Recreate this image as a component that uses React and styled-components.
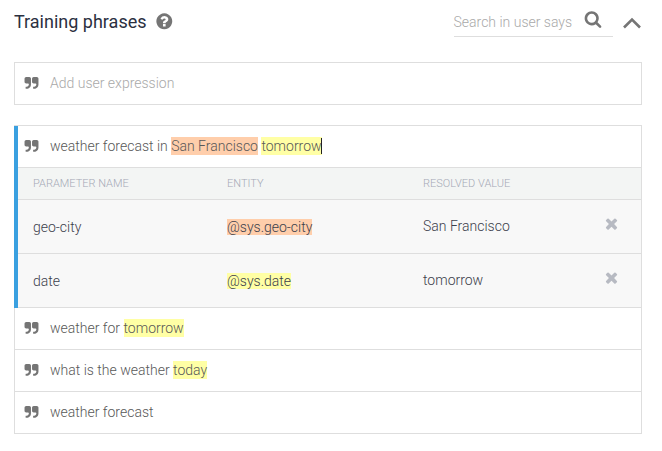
import React from "react";
import styled, { createGlobalStyle } from "styled-components";

const GlobalStyle = createGlobalStyle`
  body { margin: 0; background: #fff; }
  * { box-sizing: border-box; }
`;

const PATHS = {
  help: "M1024 1376v-192q0-14-9-23t-23-9h-192q-14 0-23 9t-9 23v192q0 14 9 23t23 9h192q14 0 23-9t9-23zm256-672q0-88-55.5-163t-138.5-116-170-41q-243 0-371 213-15 24 8 42l132 100q7 6 19 6 16 0 25-12 53-68 86-92 34-24 86-24 48 0 85.5 26t37.5 59q0 38-20 61t-68 45q-63 28-115.5 86.5t-52.5 125.5v36q0 14 9 23t23 9h192q14 0 23-9t9-23q0-19 21.5-49.5t54.5-49.5q32-18 49-28.5t46-35 44.5-48 28-60.5 12.5-81zm384 192q0 209-103 385.5t-279.5 279.5-385.5 103-385.5-103-279.5-279.5-103-385.5 103-385.5 279.5-279.5 385.5-103 385.5 103 279.5 279.5 103 385.5z",
  quote: "M832 320v704q0 104-40.5 198.5t-109.5 163.5-163.5 109.5-198.5 40.5h-64q-26 0-45-19t-19-45v-128q0-26 19-45t45-19h64q106 0 181-75t75-181v-32q0-40-28-68t-68-28h-224q-80 0-136-56t-56-136v-384q0-80 56-136t136-56h384q80 0 136 56t56 136zm896 0v704q0 104-40.5 198.5t-109.5 163.5-163.5 109.5-198.5 40.5h-64q-26 0-45-19t-19-45v-128q0-26 19-45t45-19h64q106 0 181-75t75-181v-32q0-40-28-68t-68-28h-224q-80 0-136-56t-56-136v-384q0-80 56-136t136-56h384q80 0 136 56t56 136z",
  times: "M1490 1322q0 40-28 68l-136 136q-28 28-68 28t-68-28l-294-294-294 294q-28 28-68 28t-68-28l-136-136q-28-28-28-68t28-68l294-294-294-294q-28-28-28-68t28-68l136-136q28-28 68-28t68 28l294 294 294-294q28-28 68-28t68 28l136 136q28 28 28 68t-28 68l-294 294 294 294q28 28 28 68z",
  search: "M1216 832q0-185-131.5-316.5t-316.5-131.5-316.5 131.5-131.5 316.5 131.5 316.5 316.5 131.5 316.5-131.5 131.5-316.5zm512 832q0 52-38 90t-90 38q-54 0-90-38l-343-342q-179 124-399 124-143 0-273.5-55.5t-225-150-150-225-55.5-273.5 55.5-273.5 150-225 225-150 273.5-55.5 273.5 55.5 225 150 150 225 55.5 273.5q0 220-124 399l343 343q37 37 37 90z",
};

const Svg = styled.svg`
  display: block;
  flex: none;
  width: ${(p) => p.$size}px;
  height: ${(p) => p.$size}px;
  fill: ${(p) => p.$color || "#757575"};
`;

const Icon = ({ name, size, color }) => (
  <Svg viewBox="0 0 1792 1792" $size={size} $color={color} aria-hidden="true">
    <path d={PATHS[name]} />
  </Svg>
);

const Page = styled.main`
  width: 662px;
  height: 451px;
  padding: 0 20px 0 14px;
  overflow: hidden;
  font-family: Roboto, sans-serif;
  font-size: 14px;
  font-weight: 300;
  color: #4b4b4b;
`;

const Header = styled.header`
  display: flex;
  height: 62px;
`;

const Title = styled.h1`
  margin: 0;
  padding-top: 9px;
  width: 141px;
  font-size: 18px;
  line-height: 26px;
  font-weight: 400;
  color: #2b303f;
`;

const HelpButton = styled.span`
  padding-top: 12px;
`;

const Search = styled.div`
  display: flex;
  justify-content: space-between;
  width: 159.5px;
  height: 37px;
  margin-left: auto;
  padding: 10px 11.5px 0 0;
  border-bottom: 1px solid #dedede;
  color: #a9a9a9;
  line-height: 24px;
`;

const Chevron = styled.svg`
  display: block;
  width: 18px;
  height: 12px;
  margin: 17px 1px 0 10px;
  fill: none;
  stroke: #757575;
  stroke-width: 2.6;
`;

const PhraseRow = styled.div`
  display: flex;
  align-items: center;
  height: 42px;
  padding-left: 9px;
  border-bottom: 1px solid #dedede;
  background: #fff;
  color: ${(p) => (p.$placeholder ? "#a9a9a9" : "#585858")};
`;

const Phrase = styled.span`
  margin: 0 0 2px 11px;
  line-height: 18px;
  white-space: pre;
`;

const Box = styled.section`
  border: 1px solid #dedede;
  border-bottom: 0;
  margin-bottom: 20px;
`;

const List = styled.section`
  border-right: 1px solid #dedede;
`;

const Expanded = styled.div`
  border-top: 1px solid #dedede;
  border-left: 4px solid #3aa0e0;
  border-image: linear-gradient(#3aa0e0, #3aa0e0) 0 0 0 4;
  background: linear-gradient(#dedede, #dedede) top / 100% 1px no-repeat border-box;

  & > ${PhraseRow} { padding-left: 6px; }
`;

const Collapsed = styled.div`
  border-left: 1px solid #dedede;
`;

const Mark = styled.mark`
  display: inline-block;
  height: ${(p) => (p.$compact ? 16 : 18)}px;
  line-height: ${(p) => (p.$compact ? 16 : 18)}px;
  color: inherit;
  background: ${(p) => (p.$tone === "city" ? "#ffceab" : "#ffffa5")};
`;

const Caret = styled.span`
  display: inline-block;
  width: 1px;
  height: 16px;
  margin-left: -1px;
  vertical-align: -3px;
  background: #222;
`;

const Grid = styled.div`
  display: grid;
  grid-template-columns: 194px 196px 180px 1fr;
  padding-left: 15px;
  border-bottom: 1px solid #dedede;
`;

const GridHead = styled(Grid)`
  height: 32px;
  line-height: 31px;
  font-size: 11px;
  color: #a5a9b6;
  background: #f3f5f4;
`;

const GridRow = styled(Grid)`
  height: 54px;
  color: #3c404c;
  background: #f8f8f8;
  line-height: 18px;
`;

const Cell = styled.span`
  padding-top: ${(p) => (p.$raised ? 17 : 18)}px;
`;

const Remove = styled.span`
  padding-top: 15px;
`;

const Line = ({ children, placeholder }) => (
  <PhraseRow $placeholder={placeholder}>
    <Icon name="quote" size={15} />
    <Phrase>{children}</Phrase>
  </PhraseRow>
);

const params = [
  { name: "geo-city", entity: "@sys.geo-city", value: "San Francisco", tone: "city" },
  { name: "date", entity: "@sys.date", value: "tomorrow", tone: "date" },
];

export default function App() {
  return (
    <Page>
      <GlobalStyle />
      <Header>
        <Title>Training phrases</Title>
        <HelpButton><Icon name="help" size={18.6} /></HelpButton>
        <Search>
          <span>Search in user says</span>
          <Icon name="search" size={18} />
        </Search>
        <Chevron viewBox="0 0 18 12"><path d="M1 10.5 9 2.5 17 10.5" /></Chevron>
      </Header>
      <Box>
        <Line placeholder>Add user expression</Line>
      </Box>
      <List>
        <Expanded>
          <Line>
            weather forecast in <Mark $tone="city">San Francisco</Mark> <Mark>tomorrow</Mark><Caret />
          </Line>
          <GridHead>
            <span>PARAMETER NAME</span>
            <span>ENTITY</span>
            <span>RESOLVED VALUE</span>
          </GridHead>
          {params.map((p) => (
            <GridRow key={p.name}>
              <Cell>{p.name}</Cell>
              <Cell><Mark $compact $tone={p.tone}>{p.entity}</Mark></Cell>
              <Cell $raised>{p.value}</Cell>
              <Remove><Icon name="times" size={17} color="#b7bac2" /></Remove>
            </GridRow>
          ))}
        </Expanded>
        <Collapsed>
          <Line>weather for <Mark>tomorrow</Mark></Line>
          <Line>what is the weather <Mark>today</Mark></Line>
          <Line>weather forecast</Line>
        </Collapsed>
      </List>
    </Page>
  );
}
